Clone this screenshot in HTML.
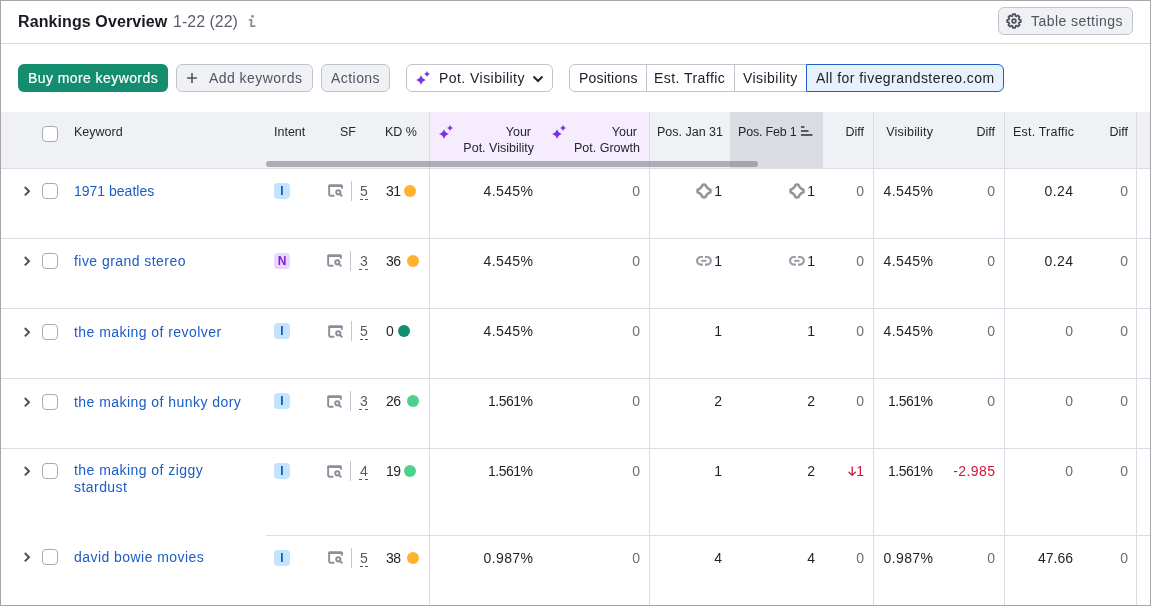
<!DOCTYPE html>
<html><head><meta charset="utf-8"><style>
*{box-sizing:border-box;margin:0;padding:0}
html,body{width:1151px;height:606px;overflow:hidden;background:#fff}
body{font-family:"Liberation Sans",sans-serif;color:#1f2129;position:relative}
.a{position:absolute;white-space:nowrap}
.frame{position:absolute;left:0;top:0;width:1151px;height:606px;border:1px solid #a6a6a6;pointer-events:none;z-index:50}
.title{left:18px;top:12px;font-size:16px;line-height:20px;font-weight:700;color:#191b22;letter-spacing:0.1px}
.count{left:173px;top:12px;font-size:16px;line-height:20px;color:#5b5f6b}
.hline{left:1px;width:1149px;height:1px;background:#d6d7e0}
.btn{position:absolute;height:28px;border-radius:6px;font-size:14px;line-height:26px;white-space:nowrap}
.gbtn{background:#f0f1f4;border:1px solid #c1c4cd;color:#50545f}
.green{background:#138d6e;color:#fff;border:none;line-height:28px;-webkit-text-stroke:0.2px #fff}
.seg{position:absolute;top:64px;height:28px;border:1px solid #c1c4cd;font-size:14px;line-height:26px;color:#202229;white-space:nowrap}
.th{position:absolute;font-size:12.5px;line-height:16px;color:#25272e;white-space:nowrap}
.td{position:absolute;font-size:14px;line-height:20px;color:#1f2129;white-space:nowrap}
.n{letter-spacing:0.4px;margin-right:-0.4px}
.g{color:#6a6e7a}
.link{color:#1b5dc4;letter-spacing:0.45px}
.vl{position:absolute;width:1px;background:#dcdce6}
.rl{position:absolute;height:1px;background:#dcdce6}
.cb{position:absolute;left:42px;width:16px;height:16px;border:1px solid #a5a9b5;border-radius:4px;background:#fff}
.badge{position:absolute;left:274px;width:16px;height:16px;border-radius:4px;font-size:12px;font-weight:700;line-height:16px;text-align:center}
.bI{background:#c4e3fc;color:#0e57c6}
.bN{background:#ebd6fc;color:#7a1fdc}
.sfdiv{position:absolute;left:351px;width:1px;height:20px;background:#c5c7d0}
.sfn{position:absolute;left:360px;font-size:13px;line-height:16px;color:#50545f;border-bottom:1px dashed #50545f;padding-bottom:1px}
.dot{position:absolute;width:12px;height:12px;border-radius:50%}
.r{text-align:right}
</style></head><body>
<div id="wrap" style="position:absolute;left:0;top:0;width:1151px;height:606px;will-change:transform">
<div class="frame"></div>
<div class="a title">Rankings Overview</div>
<div class="a count">1-22 (22)</div>
<svg class="a" style="left:245px;top:10px" width="14" height="20" viewBox="245 10 14 20"><circle cx="252.5" cy="16.4" r="1.4" fill="#8a8d99"/><path d="M249.6 19.9H251.6L251 26.1H254.6" fill="none" stroke="#8a8d99" stroke-width="1.8" stroke-linejoin="round" stroke-linecap="round"/></svg>
<div class="btn gbtn" style="left:998px;top:7px;width:135px;">
  <svg style="position:absolute;left:7px;top:5px" width="16" height="16" viewBox="0 0 16 16"><path fill="none" stroke="#4d505b" stroke-width="1.7" stroke-linejoin="round" d="M6.54 2.91 L6.80 1.20 L9.20 1.20 L9.46 2.91 L10.57 3.36 L11.96 2.35 L13.65 4.04 L12.64 5.43 L13.09 6.54 L14.80 6.80 L14.80 9.20 L13.09 9.46 L12.64 10.57 L13.65 11.96 L11.96 13.65 L10.57 12.64 L9.46 13.09 L9.20 14.80 L6.80 14.80 L6.54 13.09 L5.43 12.64 L4.04 13.65 L2.35 11.96 L3.36 10.57 L2.91 9.46 L1.20 9.20 L1.20 6.80 L2.91 6.54 L3.36 5.43 L2.35 4.04 L4.04 2.35 L5.43 3.36Z"/><circle cx="8" cy="8" r="1.9" fill="none" stroke="#4d505b" stroke-width="1.7"/></svg>
  <span style="position:absolute;left:32px;top:0;letter-spacing:0.45px">Table settings</span>
</div>
<div class="a hline" style="top:43px"></div>
<div class="btn green" style="left:18px;top:64px;width:150px;"><span style="position:absolute;left:10px;letter-spacing:0.42px">Buy more keywords</span></div>
<div class="btn gbtn" style="left:176px;top:64px;width:137px;">
  <svg style="position:absolute;left:9px;top:7px" width="12" height="12" viewBox="0 0 12 12"><path d="M6 1v10M1 6h10" stroke="#50545f" stroke-width="1.6"/></svg>
  <span style="position:absolute;left:32px;letter-spacing:0.45px">Add keywords</span></div>
<div class="btn gbtn" style="left:321px;top:64px;width:69px;"><span style="position:absolute;left:9px;letter-spacing:0.45px">Actions</span></div>
<div class="btn" style="left:406px;top:64px;width:147px;border:1px solid #c1c4cd;background:#fff;color:#202229">
  <span style="position:absolute;left:32px;letter-spacing:0.45px">Pot. Visibility</span>
  <svg style="position:absolute;left:125px;top:10px" width="12" height="8" viewBox="0 0 12 8"><path d="M1.5 1.5 6 6l4.5-4.5" fill="none" stroke="#24262d" stroke-width="2"/></svg>
</div>
<svg class="a" style="left:415px;top:70px" width="16" height="16" viewBox="0 0 16 16"><path fill="#7c2fe3" d="M6.00 5.00Q7.00 9.00 11.00 10.00Q7.00 11.00 6.00 15.00Q5.00 11.00 1.00 10.00Q5.00 9.00 6.00 5.00ZM12.00 1.00Q12.60 3.40 15.00 4.00Q12.60 4.60 12.00 7.00Q11.40 4.60 9.00 4.00Q11.40 3.40 12.00 1.00Z"/></svg>
<div class="seg" style="left:569px;width:78px;border-radius:6px 0 0 6px"><span style="position:absolute;left:9px;letter-spacing:0.2px">Positions</span></div>
<div class="seg" style="left:646px;width:89px;border-left:none"><span style="position:absolute;left:8px;letter-spacing:0.45px">Est. Traffic</span></div>
<div class="seg" style="left:734px;width:73px;"><span style="position:absolute;left:8px;letter-spacing:0.45px">Visibility</span></div>
<div class="seg" style="left:806px;width:198px;border-color:#1d5fc8;background:#e6f1fc;border-radius:0 6px 6px 0"><span style="position:absolute;left:9px;letter-spacing:0.45px">All for fivegrandstereo.com</span></div>
<div class="a" style="left:1px;top:112px;width:1149px;height:56px;background:#f0f1f5"></div>
<div class="a" style="left:430px;top:112px;width:219px;height:56px;background:#f5ecfd"></div>
<div class="a" style="left:730px;top:112px;width:93px;height:56px;background:#dbdbe3"></div>
<div class="rl" style="left:1px;top:168px;width:1149px"></div>
<div class="cb" style="top:126px"></div>
<div class="th" style="left:74px;top:124px">Keyword</div>
<div class="th" style="left:274px;top:124px">Intent</div>
<div class="th" style="left:340px;top:124px">SF</div>
<div class="th" style="left:385px;top:124px">KD %</div>
<svg class="a" style="left:438px;top:124px" width="16" height="16" viewBox="0 0 16 16"><path fill="#7c2fe3" d="M6.00 5.00Q7.00 9.00 11.00 10.00Q7.00 11.00 6.00 15.00Q5.00 11.00 1.00 10.00Q5.00 9.00 6.00 5.00ZM12.00 1.00Q12.60 3.40 15.00 4.00Q12.60 4.60 12.00 7.00Q11.40 4.60 9.00 4.00Q11.40 3.40 12.00 1.00Z"/></svg>
<div class="th r" style="left:434px;width:100px;top:124px"><span style="margin-right:3px">Your</span><br>Pot. Visibility</div>
<svg class="a" style="left:551px;top:124px" width="16" height="16" viewBox="0 0 16 16"><path fill="#7c2fe3" d="M6.00 5.00Q7.00 9.00 11.00 10.00Q7.00 11.00 6.00 15.00Q5.00 11.00 1.00 10.00Q5.00 9.00 6.00 5.00ZM12.00 1.00Q12.60 3.40 15.00 4.00Q12.60 4.60 12.00 7.00Q11.40 4.60 9.00 4.00Q11.40 3.40 12.00 1.00Z"/></svg>
<div class="th r" style="left:540px;width:100px;top:124px"><span style="margin-right:3px">Your</span><br>Pot. Growth</div>
<div class="th" style="left:657px;top:124px">Pos. Jan 31</div>
<div class="th" style="left:738px;top:124px;letter-spacing:-0.2px">Pos. Feb 1</div>
<svg class="a" style="left:801px;top:126px" width="12" height="10" viewBox="0 0 12 10"><path d="M0 1h3.5M0 5h7.5M0 9h11.5" stroke="#575a66" stroke-width="2"/></svg>
<div class="th r" style="left:804px;width:60px;top:124px">Diff</div>
<div class="th r" style="left:873.2px;width:60px;top:124px;letter-spacing:0.2px">Visibility</div>
<div class="th r" style="left:935px;width:60px;top:124px">Diff</div>
<div class="th r" style="left:1004.2px;width:70px;top:124px;letter-spacing:0.2px">Est. Traffic</div>
<div class="th r" style="left:1068px;width:60px;top:124px">Diff</div>
<div class="vl" style="left:429px;top:112px;height:493px"></div>
<div class="vl" style="left:649px;top:112px;height:493px"></div>
<div class="vl" style="left:873px;top:112px;height:493px"></div>
<div class="vl" style="left:1004px;top:112px;height:493px"></div>
<div class="vl" style="left:1136px;top:112px;height:493px"></div>
<div class="a" style="left:266px;top:161px;width:492px;height:6px;border-radius:3px;background:rgba(108,110,118,0.5)"></div>
<svg class="a" style="left:22px;top:185px" width="10" height="12" viewBox="0 0 10 12"><path d="M2.8 2 7 6.2 2.8 10.4" fill="none" stroke="#50535f" stroke-width="2"/></svg>
<div class="cb" style="top:183px"></div>
<div class="td link" style="left:74px;top:181px;letter-spacing:0px">1971 beatles</div>
<div class="badge bI" style="top:183px">I</div>
<svg class="a" style="left:326px;top:182px" width="18" height="17" viewBox="326 182 18 17"><path fill="#8c8e9a" d="M329.7 184.2H341.3A1.5 1.5 0 0 1 342.8 185.7V186.9H328.2V185.7A1.5 1.5 0 0 1 329.7 184.2Z"/><path fill="none" stroke="#8c8e9a" stroke-width="1.9" d="M334.4 195.75H330.3A1.15 1.15 0 0 1 329.15 194.6V185.5M341.85 185.5V188.8"/><circle cx="338.3" cy="192.3" r="2.1" fill="none" stroke="#8c8e9a" stroke-width="2"/><path d="M340.4 194.4 341.7 195.7" stroke="#8c8e9a" stroke-width="2" stroke-linecap="round"/></svg>
<div class="sfdiv" style="left:351px;top:181px"></div>
<div class="td" style="left:360px;top:181px;color:#555965">5</div>
<div class="a" style="left:360px;top:199px;width:8px;height:1px;background:repeating-linear-gradient(90deg,#555965 0 3px,transparent 3px 5px)"></div>
<div class="td" style="left:386px;top:181px;letter-spacing:-0.6px">31</div>
<div class="dot" style="left:404px;top:185px;background:#ffb12f"></div>
<div class="td r" style="letter-spacing:0.4px;left:433.4px;width:100px;top:181px">4.545%</div>
<div class="td r g" style="left:540px;width:100px;top:181px">0</div>
<svg class="a" style="left:695px;top:182px" width="18" height="18" viewBox="0 0 18 18"><path fill="none" stroke="#94959f" stroke-width="2.5" stroke-linejoin="round" d="M7.0 4.4A2.0 2.0 0 0 1 11.0 4.4L13.6 7.0A2.0 2.0 0 0 1 13.6 11.0L11.0 13.6A2.0 2.0 0 0 1 7.0 13.6L4.4 11.0A2.0 2.0 0 0 1 4.4 7.0Z"/></svg>
<div class="td r" style="left:662px;width:60px;top:181px">1</div>
<svg class="a" style="left:788px;top:182px" width="18" height="18" viewBox="0 0 18 18"><path fill="none" stroke="#94959f" stroke-width="2.5" stroke-linejoin="round" d="M7.0 4.4A2.0 2.0 0 0 1 11.0 4.4L13.6 7.0A2.0 2.0 0 0 1 13.6 11.0L11.0 13.6A2.0 2.0 0 0 1 7.0 13.6L4.4 11.0A2.0 2.0 0 0 1 4.4 7.0Z"/></svg>
<div class="td r" style="left:755px;width:60px;top:181px">1</div>
<div class="td r" style="left:804px;width:60px;top:181px;color:#6a6e7a">0</div>
<div class="td r" style="letter-spacing:0.4px;left:853.4px;width:80px;top:181px">4.545%</div>
<div class="td r" style="letter-spacing:0px;left:915px;width:80px;top:181px;color:#6a6e7a">0</div>
<div class="td r" style="letter-spacing:0.4px;left:993.4px;width:80px;top:181px;color:#1f2129">0.24</div>
<div class="td r g" style="left:1068px;width:60px;top:181px">0</div>
<div class="rl" style="left:1px;top:238px;width:1149px"></div>
<svg class="a" style="left:22px;top:255px" width="10" height="12" viewBox="0 0 10 12"><path d="M2.8 2 7 6.2 2.8 10.4" fill="none" stroke="#50535f" stroke-width="2"/></svg>
<div class="cb" style="top:253px"></div>
<div class="td link" style="left:74px;top:251px;letter-spacing:0.45px">five grand stereo</div>
<div class="badge bN" style="top:253px">N</div>
<svg class="a" style="left:325px;top:252px" width="18" height="17" viewBox="326 182 18 17"><path fill="#8c8e9a" d="M329.7 184.2H341.3A1.5 1.5 0 0 1 342.8 185.7V186.9H328.2V185.7A1.5 1.5 0 0 1 329.7 184.2Z"/><path fill="none" stroke="#8c8e9a" stroke-width="1.9" d="M334.4 195.75H330.3A1.15 1.15 0 0 1 329.15 194.6V185.5M341.85 185.5V188.8"/><circle cx="338.3" cy="192.3" r="2.1" fill="none" stroke="#8c8e9a" stroke-width="2"/><path d="M340.4 194.4 341.7 195.7" stroke="#8c8e9a" stroke-width="2" stroke-linecap="round"/></svg>
<div class="sfdiv" style="left:350px;top:251px"></div>
<div class="td" style="left:360px;top:251px;color:#555965">3</div>
<div class="a" style="left:359px;top:269px;width:9px;height:1px;background:repeating-linear-gradient(90deg,#555965 0 3px,transparent 3px 6px)"></div>
<div class="td" style="left:386px;top:251px;letter-spacing:-0.6px">36</div>
<div class="dot" style="left:407px;top:255px;background:#ffb12f"></div>
<div class="td r" style="letter-spacing:0.4px;left:433.4px;width:100px;top:251px">4.545%</div>
<div class="td r g" style="left:540px;width:100px;top:251px">0</div>
<svg class="a" style="left:695px;top:252px" width="18" height="18" viewBox="0 0 18 18"><path fill="none" stroke="#9a9ba6" stroke-width="2.2" d="M7.9 5H5.95A3.85 3.85 0 0 0 5.95 12.7H7.9M10 5H11.95A3.85 3.85 0 0 1 11.95 12.7H10"/><path d="M6.2 8.85H11.5" stroke="#9a9ba6" stroke-width="2"/></svg>
<div class="td r" style="left:662px;width:60px;top:251px">1</div>
<svg class="a" style="left:788px;top:252px" width="18" height="18" viewBox="0 0 18 18"><path fill="none" stroke="#9a9ba6" stroke-width="2.2" d="M7.9 5H5.95A3.85 3.85 0 0 0 5.95 12.7H7.9M10 5H11.95A3.85 3.85 0 0 1 11.95 12.7H10"/><path d="M6.2 8.85H11.5" stroke="#9a9ba6" stroke-width="2"/></svg>
<div class="td r" style="left:755px;width:60px;top:251px">1</div>
<div class="td r" style="left:804px;width:60px;top:251px;color:#6a6e7a">0</div>
<div class="td r" style="letter-spacing:0.4px;left:853.4px;width:80px;top:251px">4.545%</div>
<div class="td r" style="letter-spacing:0px;left:915px;width:80px;top:251px;color:#6a6e7a">0</div>
<div class="td r" style="letter-spacing:0.4px;left:993.4px;width:80px;top:251px;color:#1f2129">0.24</div>
<div class="td r g" style="left:1068px;width:60px;top:251px">0</div>
<div class="rl" style="left:1px;top:308px;width:1149px"></div>
<svg class="a" style="left:22px;top:326px" width="10" height="12" viewBox="0 0 10 12"><path d="M2.8 2 7 6.2 2.8 10.4" fill="none" stroke="#50535f" stroke-width="2"/></svg>
<div class="cb" style="top:324px"></div>
<div class="td link" style="left:74px;top:322px;letter-spacing:0.45px">the making of revolver</div>
<div class="badge bI" style="top:323px">I</div>
<svg class="a" style="left:326px;top:323px" width="18" height="17" viewBox="326 182 18 17"><path fill="#8c8e9a" d="M329.7 184.2H341.3A1.5 1.5 0 0 1 342.8 185.7V186.9H328.2V185.7A1.5 1.5 0 0 1 329.7 184.2Z"/><path fill="none" stroke="#8c8e9a" stroke-width="1.9" d="M334.4 195.75H330.3A1.15 1.15 0 0 1 329.15 194.6V185.5M341.85 185.5V188.8"/><circle cx="338.3" cy="192.3" r="2.1" fill="none" stroke="#8c8e9a" stroke-width="2"/><path d="M340.4 194.4 341.7 195.7" stroke="#8c8e9a" stroke-width="2" stroke-linecap="round"/></svg>
<div class="sfdiv" style="left:351px;top:321px"></div>
<div class="td" style="left:360px;top:321px;color:#555965">5</div>
<div class="a" style="left:360px;top:339px;width:8px;height:1px;background:repeating-linear-gradient(90deg,#555965 0 3px,transparent 3px 5px)"></div>
<div class="td" style="left:386px;top:321px;letter-spacing:-0.6px">0</div>
<div class="dot" style="left:398px;top:325px;background:#138e6f"></div>
<div class="td r" style="letter-spacing:0.4px;left:433.4px;width:100px;top:321px">4.545%</div>
<div class="td r g" style="left:540px;width:100px;top:321px">0</div>
<div class="td r" style="left:662px;width:60px;top:321px">1</div>
<div class="td r" style="left:755px;width:60px;top:321px">1</div>
<div class="td r" style="left:804px;width:60px;top:321px;color:#6a6e7a">0</div>
<div class="td r" style="letter-spacing:0.4px;left:853.4px;width:80px;top:321px">4.545%</div>
<div class="td r" style="letter-spacing:0px;left:915px;width:80px;top:321px;color:#6a6e7a">0</div>
<div class="td r" style="letter-spacing:0px;left:993px;width:80px;top:321px;color:#6a6e7a">0</div>
<div class="td r g" style="left:1068px;width:60px;top:321px">0</div>
<div class="rl" style="left:1px;top:378px;width:1149px"></div>
<svg class="a" style="left:22px;top:396px" width="10" height="12" viewBox="0 0 10 12"><path d="M2.8 2 7 6.2 2.8 10.4" fill="none" stroke="#50535f" stroke-width="2"/></svg>
<div class="cb" style="top:394px"></div>
<div class="td link" style="left:74px;top:392px;letter-spacing:0.45px">the making of hunky dory</div>
<div class="badge bI" style="top:393px">I</div>
<svg class="a" style="left:325px;top:393px" width="18" height="17" viewBox="326 182 18 17"><path fill="#8c8e9a" d="M329.7 184.2H341.3A1.5 1.5 0 0 1 342.8 185.7V186.9H328.2V185.7A1.5 1.5 0 0 1 329.7 184.2Z"/><path fill="none" stroke="#8c8e9a" stroke-width="1.9" d="M334.4 195.75H330.3A1.15 1.15 0 0 1 329.15 194.6V185.5M341.85 185.5V188.8"/><circle cx="338.3" cy="192.3" r="2.1" fill="none" stroke="#8c8e9a" stroke-width="2"/><path d="M340.4 194.4 341.7 195.7" stroke="#8c8e9a" stroke-width="2" stroke-linecap="round"/></svg>
<div class="sfdiv" style="left:350px;top:391px"></div>
<div class="td" style="left:360px;top:391px;color:#555965">3</div>
<div class="a" style="left:359px;top:409px;width:9px;height:1px;background:repeating-linear-gradient(90deg,#555965 0 3px,transparent 3px 6px)"></div>
<div class="td" style="left:386px;top:391px;letter-spacing:-0.6px">26</div>
<div class="dot" style="left:407px;top:395px;background:#4fd18e"></div>
<div class="td r" style="letter-spacing:-0.5px;left:432.5px;width:100px;top:391px">1.561%</div>
<div class="td r g" style="left:540px;width:100px;top:391px">0</div>
<div class="td r" style="left:662px;width:60px;top:391px">2</div>
<div class="td r" style="left:755px;width:60px;top:391px">2</div>
<div class="td r" style="left:804px;width:60px;top:391px;color:#6a6e7a">0</div>
<div class="td r" style="letter-spacing:-0.5px;left:852.5px;width:80px;top:391px">1.561%</div>
<div class="td r" style="letter-spacing:0px;left:915px;width:80px;top:391px;color:#6a6e7a">0</div>
<div class="td r" style="letter-spacing:0px;left:993px;width:80px;top:391px;color:#6a6e7a">0</div>
<div class="td r g" style="left:1068px;width:60px;top:391px">0</div>
<div class="rl" style="left:1px;top:448px;width:1149px"></div>
<svg class="a" style="left:22px;top:465px" width="10" height="12" viewBox="0 0 10 12"><path d="M2.8 2 7 6.2 2.8 10.4" fill="none" stroke="#50535f" stroke-width="2"/></svg>
<div class="cb" style="top:463px"></div>
<div class="td link" style="left:74px;top:460px;letter-spacing:0.45px">the making of ziggy</div>
<div class="td link" style="left:74px;top:477px;letter-spacing:0.45px">stardust</div>
<div class="badge bI" style="top:463px">I</div>
<svg class="a" style="left:325px;top:463px" width="18" height="17" viewBox="326 182 18 17"><path fill="#8c8e9a" d="M329.7 184.2H341.3A1.5 1.5 0 0 1 342.8 185.7V186.9H328.2V185.7A1.5 1.5 0 0 1 329.7 184.2Z"/><path fill="none" stroke="#8c8e9a" stroke-width="1.9" d="M334.4 195.75H330.3A1.15 1.15 0 0 1 329.15 194.6V185.5M341.85 185.5V188.8"/><circle cx="338.3" cy="192.3" r="2.1" fill="none" stroke="#8c8e9a" stroke-width="2"/><path d="M340.4 194.4 341.7 195.7" stroke="#8c8e9a" stroke-width="2" stroke-linecap="round"/></svg>
<div class="sfdiv" style="left:350px;top:461px"></div>
<div class="td" style="left:360px;top:461px;color:#555965">4</div>
<div class="a" style="left:359px;top:479px;width:9px;height:1px;background:repeating-linear-gradient(90deg,#555965 0 3px,transparent 3px 6px)"></div>
<div class="td" style="left:386px;top:461px;letter-spacing:-0.6px">19</div>
<div class="dot" style="left:404px;top:465px;background:#4fd18e"></div>
<div class="td r" style="letter-spacing:-0.5px;left:432.5px;width:100px;top:461px">1.561%</div>
<div class="td r g" style="left:540px;width:100px;top:461px">0</div>
<div class="td r" style="left:662px;width:60px;top:461px">1</div>
<div class="td r" style="left:755px;width:60px;top:461px">2</div>
<svg class="a" style="left:847px;top:465px" width="10" height="12" viewBox="847 465 10 12"><path d="M852.2 466.8V475.3M849 472.2L852.2 475.4L855.4 472.2" fill="none" stroke="#d0173c" stroke-width="1.3" stroke-linejoin="round" stroke-linecap="round"/></svg>
<div class="td r" style="left:804px;width:60px;top:461px;color:#d0173c">1</div>
<div class="td r" style="letter-spacing:-0.5px;left:852.5px;width:80px;top:461px">1.561%</div>
<div class="td r" style="letter-spacing:0.4px;left:915.4px;width:80px;top:461px;color:#d0173c">-2.985</div>
<div class="td r" style="letter-spacing:0px;left:993px;width:80px;top:461px;color:#6a6e7a">0</div>
<div class="td r g" style="left:1068px;width:60px;top:461px">0</div>
<div class="rl" style="left:266px;top:535px;width:884px"></div>
<svg class="a" style="left:22px;top:551px" width="10" height="12" viewBox="0 0 10 12"><path d="M2.8 2 7 6.2 2.8 10.4" fill="none" stroke="#50535f" stroke-width="2"/></svg>
<div class="cb" style="top:549px"></div>
<div class="td link" style="left:74px;top:547px;letter-spacing:0.45px">david bowie movies</div>
<div class="badge bI" style="top:550px">I</div>
<svg class="a" style="left:326px;top:549px" width="18" height="17" viewBox="326 182 18 17"><path fill="#8c8e9a" d="M329.7 184.2H341.3A1.5 1.5 0 0 1 342.8 185.7V186.9H328.2V185.7A1.5 1.5 0 0 1 329.7 184.2Z"/><path fill="none" stroke="#8c8e9a" stroke-width="1.9" d="M334.4 195.75H330.3A1.15 1.15 0 0 1 329.15 194.6V185.5M341.85 185.5V188.8"/><circle cx="338.3" cy="192.3" r="2.1" fill="none" stroke="#8c8e9a" stroke-width="2"/><path d="M340.4 194.4 341.7 195.7" stroke="#8c8e9a" stroke-width="2" stroke-linecap="round"/></svg>
<div class="sfdiv" style="left:351px;top:548px"></div>
<div class="td" style="left:360px;top:548px;color:#555965">5</div>
<div class="a" style="left:360px;top:566px;width:8px;height:1px;background:repeating-linear-gradient(90deg,#555965 0 3px,transparent 3px 5px)"></div>
<div class="td" style="left:386px;top:548px;letter-spacing:-0.6px">38</div>
<div class="dot" style="left:407px;top:552px;background:#ffb12f"></div>
<div class="td r" style="letter-spacing:0.4px;left:433.4px;width:100px;top:548px">0.987%</div>
<div class="td r g" style="left:540px;width:100px;top:548px">0</div>
<div class="td r" style="left:662px;width:60px;top:548px">4</div>
<div class="td r" style="left:755px;width:60px;top:548px">4</div>
<div class="td r" style="left:804px;width:60px;top:548px;color:#6a6e7a">0</div>
<div class="td r" style="letter-spacing:0.4px;left:853.4px;width:80px;top:548px">0.987%</div>
<div class="td r" style="letter-spacing:0px;left:915px;width:80px;top:548px;color:#6a6e7a">0</div>
<div class="td r" style="letter-spacing:0px;left:993px;width:80px;top:548px;color:#1f2129">47.66</div>
<div class="td r g" style="left:1068px;width:60px;top:548px">0</div>
</div></body></html>
